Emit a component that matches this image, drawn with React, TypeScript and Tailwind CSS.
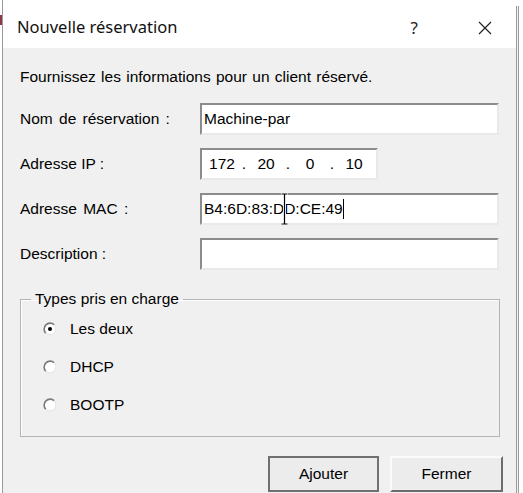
import React from 'react'

const Radio = ({ checked }: { checked?: boolean }) => (
    <svg width="14" height="14" viewBox="0 0 14 14" className="shrink-0">
        <circle cx="7" cy="7" r="6" fill="#ffffff" />
        <path d="M2.76 11.24 A6 6 0 0 1 11.24 2.76" fill="none" stroke="#7a7a7a" strokeWidth="1.6" />
        <path d="M11.24 2.76 A6 6 0 0 1 2.76 11.24" fill="none" stroke="#e6e6e6" strokeWidth="1.2" />
        {checked && <circle cx="7" cy="7" r="2" fill="#000000" />}
    </svg>
)

const Field = ({ children, wide = true }: { children?: React.ReactNode; wide?: boolean }) => (
    <div
        className={`${wide ? 'w-[299px]' : 'w-[178px]'} h-[32px] bg-white border-2 border-t-[#8c8c8c] border-l-[#8c8c8c] border-b-[#e9e9e9] border-r-[#e9e9e9] flex items-center pl-[2px] relative`}
    >
        {children}
    </div>
)

const App = () => {
    return (
        <div className="w-[523px] h-[493px] bg-white flex overflow-hidden font-['Liberation_Sans',Arial,sans-serif] text-[15.5px] text-black">
            {/* bord gauche */}
            <div className="w-[2px] flex flex-col">
                <div className="h-[15px]" />
                <div className="h-[10px] bg-[#8a3b4a]" />
            </div>
            <div className="w-[1px] bg-[#9a9a9a]" />

            <div className="w-[513px] flex flex-col">
                {/* barre de titre */}
                <div className="h-[48px] bg-white flex items-center pt-[7px] pl-[14px] pr-[24px]">
                    <span className="font-['Noto_Sans',sans-serif] text-[16.5px] text-[#111]">Nouvelle réservation</span>
                    <span className="ml-auto mr-[60px] font-['Noto_Sans',sans-serif] text-[17px] text-[#222]">?</span>
                    <svg width="14" height="14" viewBox="0 0 14 14">
                        <path d="M1 1 L13 13 M13 1 L1 13" stroke="#222" strokeWidth="1.2" />
                    </svg>
                </div>

                {/* contenu */}
                <div className="flex-1 bg-[#f0f0f0] pl-[17px] flex flex-col">
                    <p className="mt-[20px] leading-[18px] [word-spacing:1px]">Fournissez les informations pour un client réservé.</p>

                    <div className="mt-[17px] flex flex-col gap-[13px]">
                        <div className="flex items-center">
                            <span className="w-[180px] [word-spacing:2px]">Nom de réservation :</span>
                            <Field>
                                <span>Machine-par</span>
                            </Field>
                        </div>
                        <div className="flex items-center">
                            <span className="w-[180px]">Adresse IP :</span>
                            <Field wide={false}>
                                <div className="flex items-center pl-[5px]">
                                    <span className="w-[26px] text-center">172</span>
                                    <span className="w-[18px] text-center">.</span>
                                    <span className="w-[26px] text-center">20</span>
                                    <span className="w-[18px] text-center">.</span>
                                    <span className="w-[26px] text-center">0</span>
                                    <span className="w-[18px] text-center">.</span>
                                    <span className="w-[26px] text-center">10</span>
                                </div>
                            </Field>
                        </div>
                        <div className="flex items-center">
                            <span className="w-[180px] [word-spacing:2px]">Adresse MAC :</span>
                            <Field>
                                <span>B4:6D:83:DD:CE:49</span>
                                <span className="w-[1px] h-[20px] bg-black" />
                                {/* curseur souris */}
                                <svg width="9" height="32" viewBox="0 0 9 32" className="absolute left-[78px] top-[-2px]">
                                    <path d="M1 1 H8 M4.5 1 V31 M1 31 H8" stroke="#ffffff" strokeWidth="3" />
                                    <path d="M1.5 1 H7.5 M4.5 1 V31 M1.5 31 H7.5" stroke="#000000" strokeWidth="1.2" />
                                </svg>
                            </Field>
                        </div>
                        <div className="flex items-center">
                            <span className="w-[180px]">Description :</span>
                            <Field />
                        </div>
                    </div>

                    <fieldset className="mt-[20px] w-[480px] h-[147px] border border-[#b4b4b4] shadow-[inset_1px_1px_0_#ffffff] pl-[10px]">
                        <legend className="px-[4px] leading-[18px]">Types pris en charge</legend>
                        <div className="flex flex-col gap-[20px] mt-[12px] pl-[12px]">
                            <label className="flex items-center gap-[13px] h-[18px]">
                                <Radio checked />
                                <span>Les deux</span>
                            </label>
                            <label className="flex items-center gap-[13px] h-[18px]">
                                <Radio />
                                <span>DHCP</span>
                            </label>
                            <label className="flex items-center gap-[13px] h-[18px]">
                                <Radio />
                                <span>BOOTP</span>
                            </label>
                        </div>
                    </fieldset>

                    <div className="mt-[19px] flex justify-end gap-[11px] pr-[13px]">
                        <button className="w-[111px] h-[36px] bg-[#ececec] border-2 border-[#707070] flex items-center justify-center">
                            Ajouter
                        </button>
                        <button className="w-[113px] h-[36px] bg-[#ececec] border-2 border-t-[#fafafa] border-l-[#fafafa] border-b-[#6c6c6c] border-r-[#6c6c6c] flex items-center justify-center">
                            Fermer
                        </button>
                    </div>
                </div>
            </div>

            {/* bord droit */}
            <div className="w-[1px] bg-[#9a9a9a] mt-[6px]" />
            <div className="w-[1px] bg-[#f4f4f4] mt-[6px]" />
            <div className="w-[1px] bg-[#9a9a9a] mt-[6px]" />
            <div className="flex-1 bg-white" />
        </div>
    );
};

export default App
